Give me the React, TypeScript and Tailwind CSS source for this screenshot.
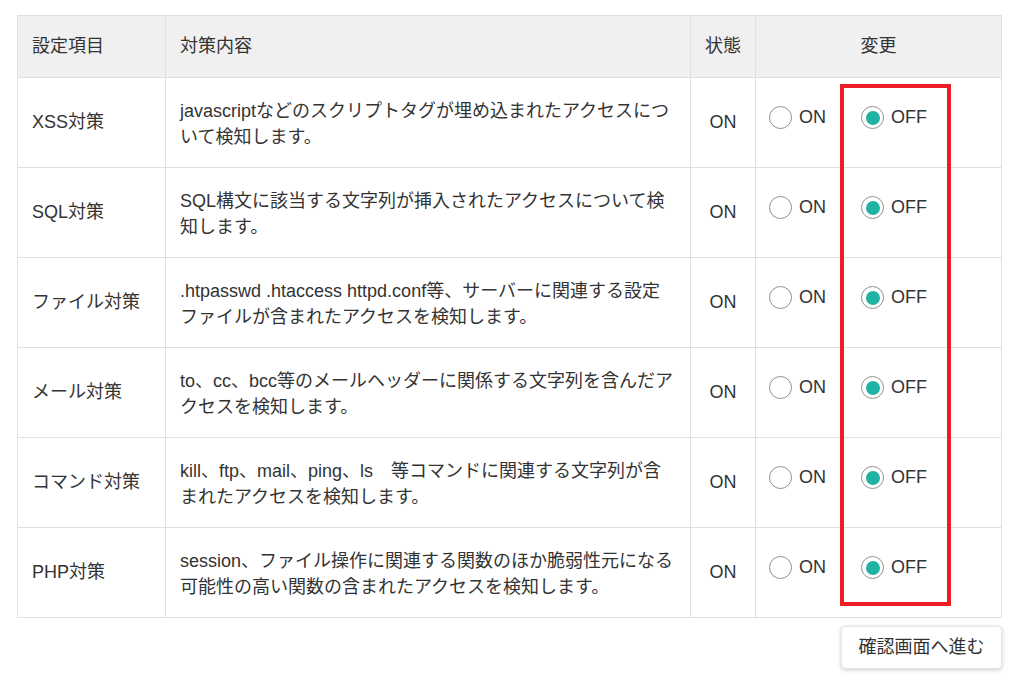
import React from "react";

const rows = [
  { name: "XSS対策", desc: "javascriptなどのスクリプトタグが埋め込まれたアクセスについて検知します。" },
  { name: "SQL対策", desc: "SQL構文に該当する文字列が挿入されたアクセスについて検知します。" },
  { name: "ファイル対策", desc: ".htpasswd .htaccess httpd.conf等、サーバーに関連する設定ファイルが含まれたアクセスを検知します。" },
  { name: "メール対策", desc: "to、cc、bcc等のメールヘッダーに関係する文字列を含んだアクセスを検知します。" },
  { name: "コマンド対策", desc: "kill、ftp、mail、ping、ls　等コマンドに関連する文字列が含まれたアクセスを検知します。" },
  { name: "PHP対策", desc: "session、ファイル操作に関連する関数のほか脆弱性元になる可能性の高い関数の含まれたアクセスを検知します。" },
];

function Radio({ checked, label }: { checked: boolean; label: string }) {
  return (
    <span className="flex items-center gap-[7px]">
      <span className="w-[23px] h-[23px] rounded-full border border-[#8f8f8f] bg-white flex items-center justify-center">
        {checked && <span className="w-[14px] h-[14px] rounded-full bg-[#20b2a2]" />}
      </span>
      <span>{label}</span>
    </span>
  );
}

export default function App() {
  return (
    <div
      className="w-[1024px] h-[684px] bg-white text-[#333] text-[18px]"
      style={{ fontFamily: '"Liberation Sans", Arial, "Noto Sans CJK JP", sans-serif' }}
    >
      <div className="pt-[15px] pl-[17px] w-[1002px]">
        <div className="relative">
          <table className="w-[984px] border-collapse border border-[#e0e0e0] table-fixed">
            <colgroup>
              <col className="w-[148px]" />
              <col className="w-[525px]" />
              <col className="w-[65px]" />
              <col className="w-[246px]" />
            </colgroup>
            <thead>
              <tr className="bg-[#f0f0f0] h-[62px]">
                <th className="border border-[#e0e0e0] text-left font-normal px-[14px]">設定項目</th>
                <th className="border border-[#e0e0e0] text-left font-normal px-[14px]">対策内容</th>
                <th className="border border-[#e0e0e0] text-center font-normal">状態</th>
                <th className="border border-[#e0e0e0] text-center font-normal">変更</th>
              </tr>
            </thead>
            <tbody>
              {rows.map((r) => (
                <tr key={r.name} className="h-[90px]">
                  <td className="border border-[#e0e0e0] px-[14px]">{r.name}</td>
                  <td className="border border-[#e0e0e0] px-[14px] pt-[2px] leading-[26px]">{r.desc}</td>
                  <td className="border border-[#e0e0e0] text-center">ON</td>
                  <td className="border border-[#e0e0e0] pl-[13px] pb-[10px]">
                    <div className="flex items-center">
                      <div className="w-[92px] flex">
                        <Radio checked={false} label="ON" />
                      </div>
                      <Radio checked={true} label="OFF" />
                    </div>
                  </td>
                </tr>
              ))}
            </tbody>
          </table>
          <div className="absolute left-[823px] top-[69px] w-[111px] h-[522px] border-4 border-[#ee1c25] pointer-events-none" />
        </div>
        <div className="flex justify-end mt-[8px] pr-0">
          <button className="w-[161px] h-[43px] bg-white rounded-[4px] border border-[#e5e5e5] shadow-[0_1px_4px_rgba(0,0,0,0.2)] text-[18px] text-[#333]">
            確認画面へ進む
          </button>
        </div>
      </div>
    </div>
  );
}
